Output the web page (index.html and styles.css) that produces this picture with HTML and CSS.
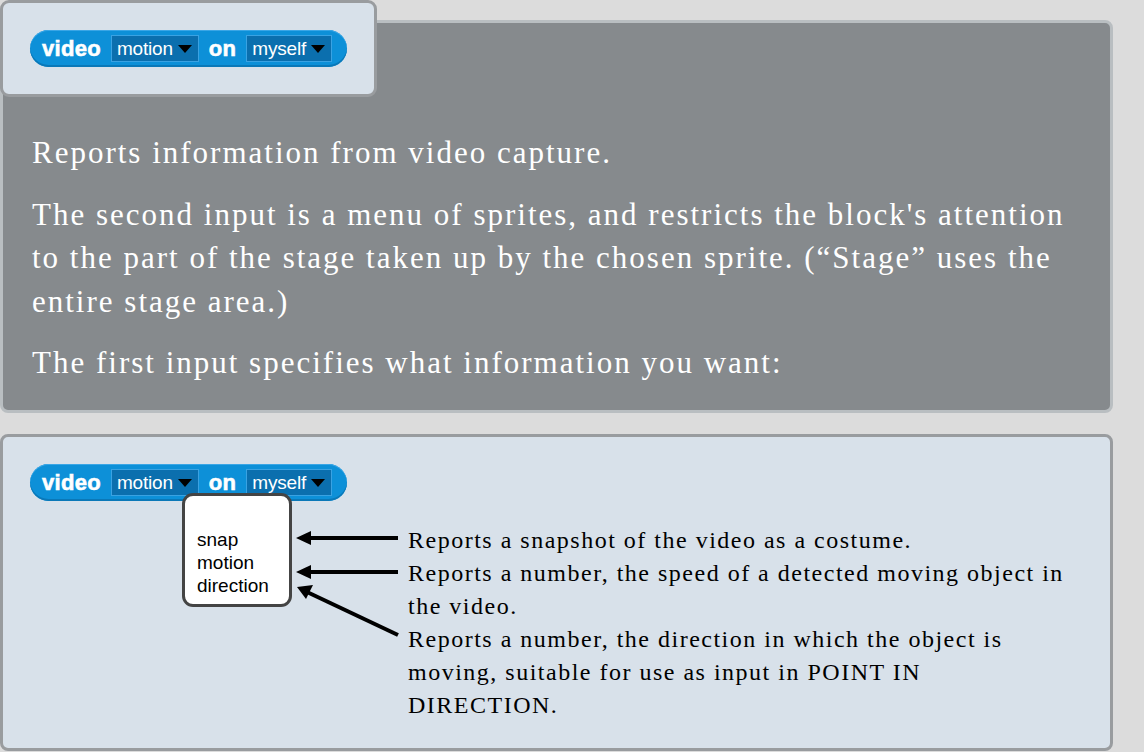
FILE: index.html
```html
<!DOCTYPE html>
<html>
<head>
<meta charset="utf-8">
<link rel="stylesheet" href="styles.css">
</head>
<body>
<div class="page">
  <section class="desc">
    <div class="card">
      <div class="block">
        <span class="kw">video</span>
        <span class="slot">motion<i class="tri"></i></span>
        <span class="kw">on</span>
        <span class="slot">myself<i class="tri"></i></span>
      </div>
    </div>
    <p class="p1">Reports information from video capture.</p>
    <p>The second input is a menu of sprites, and restricts the block's attention to the part of the stage taken up by the chosen sprite. (“Stage” uses the entire stage area.)</p>
    <p>The first input specifies what information you want:</p>
  </section>
  <section class="example">
    <div class="block">
      <span class="kw">video</span>
      <span class="slot">motion<i class="tri"></i></span>
      <span class="kw">on</span>
      <span class="slot">myself<i class="tri"></i></span>
    </div>
    <div class="legend">
      <div class="menu">
        <div>snap</div>
        <div>motion</div>
        <div>direction</div>
      </div>
      <svg class="arrows" width="108" height="160" viewBox="0 0 108 160">
        <line x1="106" y1="45" x2="16" y2="45" stroke="#000" stroke-width="4"/>
        <polygon points="4,45 19,38 19,52" fill="#000"/>
        <line x1="106" y1="79" x2="16" y2="79" stroke="#000" stroke-width="4"/>
        <polygon points="4,79 19,72 19,86" fill="#000"/>
        <line x1="106" y1="142" x2="15" y2="99" stroke="#000" stroke-width="4"/>
        <polygon points="5,94 21,92 14,106" fill="#000"/>
      </svg>
      <div class="notes">
        <p>Reports a snapshot of the video as a costume.</p>
        <p>Reports a number, the speed of a detected moving object in the video.</p>
        <p>Reports a number, the direction in which the object is moving, suitable for use as input in POINT IN DIRECTION.</p>
      </div>
    </div>
  </section>
</div>
</body>
</html>
```
FILE: styles.css
```css
html, body {
  margin: 0;
  padding: 0;
  background: #dcdcdc;
}
.page {
  width: 1113px;
  font-family: "Liberation Serif", "Times New Roman", serif;
}
.desc {
  box-sizing: border-box;
  margin-top: 20px;
  height: 393px;
  background: #868a8d;
  border: 3px solid #b9bec1;
  border-radius: 8px;
  padding: 0 29px;
  color: #fff;
  font-size: 31px;
  letter-spacing: 2px;
  line-height: 43.5px;
}
.desc p {
  margin: 18px 0 0;
}
.desc p.p1 {
  margin-top: 34px;
}
.card {
  box-sizing: border-box;
  width: 377px;
  height: 97px;
  margin: -23px 0 0 -32px;
  background: #d8e1ea;
  border: 3px solid #999c9f;
  border-radius: 9px;
  padding: 27px 0 0 27px;
  letter-spacing: 0;
}
.block {
  box-sizing: border-box;
  display: flex;
  width: fit-content;
  align-items: center;
  gap: 10px;
  height: 37px;
  padding: 0 15px 0 12px;
  background: #0d90d8;
  border-radius: 19px;
  box-shadow: inset 0 -2px 0 #0a78b8, inset 0 1px 0 #3aa6e6;
  font-family: "Liberation Sans", Arial, sans-serif;
  color: #fff;
  letter-spacing: 0;
}
.kw {
  font-weight: bold;
  font-size: 22px;
  line-height: 1;
  letter-spacing: 0.3px;
  -webkit-text-stroke: 0.6px #fff;
}
.slot {
  box-sizing: border-box;
  display: inline-flex;
  align-items: center;
  height: 27px;
  padding: 0 6px 0 5px;
  background: #0b6fae;
  border: 1px solid #3aa2e2;
  font-size: 19px;
  line-height: 1;
  letter-spacing: -0.2px;
}
.tri {
  display: inline-block;
  width: 0;
  height: 0;
  margin-left: 5px;
  border-left: 7px solid transparent;
  border-right: 7px solid transparent;
  border-top: 8px solid #000;
}
.example {
  box-sizing: border-box;
  margin-top: 21px;
  height: 317px;
  background: #d8e1ea;
  border: 3px solid #999c9f;
  border-radius: 8px;
  padding: 27px 29px 0 27px;
}
.legend {
  display: flex;
  align-items: flex-start;
  margin-top: -8px;
}
.menu {
  box-sizing: border-box;
  position: relative;
  width: 110px;
  height: 114px;
  margin-left: 152px;
  padding: 32px 0 0 12px;
  background: #fff;
  border: 3px solid #444;
  border-radius: 11px;
  font-family: "Liberation Sans", Arial, sans-serif;
  font-size: 19px;
  line-height: 23px;
  color: #000;
}
.arrows {
  display: block;
  flex: none;
}
.notes {
  width: 662px;
  margin: 31px 0 0 8px;
  font-size: 24px;
  letter-spacing: 1.5px;
  line-height: 33px;
  color: #000;
}
.notes p {
  margin: 0;
}
```
